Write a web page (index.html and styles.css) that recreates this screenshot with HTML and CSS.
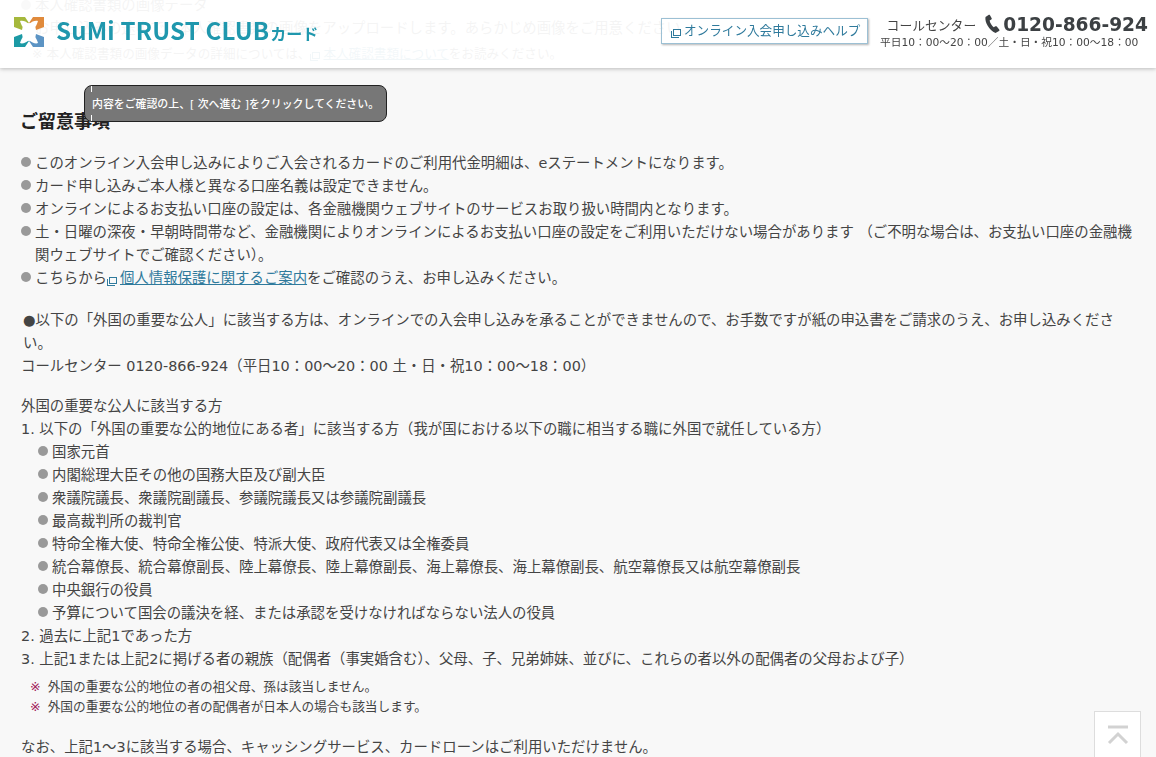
FILE: index.html
```html
<!DOCTYPE html>
<html lang="ja">
<head>
    <meta charset="UTF-8">
    <title>オンライン入会申し込み</title>
    <link rel="stylesheet" href="styles.css">
</head>
<body>
    <!-- 固定ヘッダー -->
    <header class="site-header">
        <div class="logo">
            <svg class="logo-mark" width="32" height="32" viewBox="0 0 32 32">
                <path d="M1 1h11l4 6-6 2-1 5-8-3z" fill="#a5b83c"/>
                <path d="M31 1H20l-4 6 6 2 1 5 8-3z" fill="#e08a3c"/>
                <path d="M1 31h11l4-6-6-2-1-5-8 3z" fill="#1c9aa5"/>
                <path d="M31 31H20l-4-6 6-2 1-5 8 3z" fill="#5c94c4"/>
                <path d="M16 8c3-3 7-4 9-3-1 3-2 6-5 8l-2 3 2 3c3 2 4 5 5 8-2 1-6 0-9-3-3 3-7 4-9 3 1-3 2-6 5-8l2-3-2-3C9 11 8 8 7 5c2-1 6 0 9 3z" fill="#fff"/>
            </svg>
            <span class="logo-text">SuMi TRUST CLUB<span class="logo-kana">カード</span></span>
        </div>
        <div class="header-right">
            <a class="help-btn" href="#"><span class="win-icon"></span>オンライン入会申し込みヘルプ</a>
            <div class="call-box">
                <div class="call-main">
                    <span class="call-label">コールセンター</span>
                    <svg class="phone" width="18" height="20" viewBox="0 0 18 20">
                        <path d="M4.5 1 1.500 3C.5 8 5 16 11.500 19l3.500-2c.6-.4.6-1 .2-1.500l-2.400-3c-.4-.4-1-.5-1.400-.2l-1.700 1C8 12 6 9 5.600 6.500l1.700-1c.5-.3.600-.8.400-1.300L6 1.300C5.700.8 5 .7 4.500 1z" fill="#3c4043"/>
                    </svg>
                    <span class="call-number">0120-866-924</span>
                </div>
                <div class="call-hours">平日10：00～20：00／土・日・祝10：00～18：00</div>
            </div>
        </div>
    </header>

    <div class="tooltip">内容をご確認の上、[ 次へ進む ]をクリックしてください。</div>

    <main class="main-content">
        <!-- ヘッダーの下に隠れる部分 -->
        <div class="behind">
            <p><span class="dot"></span>本人確認書類の画像データ</p>
            <p class="behind-line">お申し込みの途中で、本人確認書類の画像をアップロードします。あらかじめ画像をご用意ください。</p>
            <p class="behind-note"><span class="behind-mark">※</span>本人確認書類の画像データの詳細については、<span class="win-icon"></span><a href="#">本人確認書類について</a>をお読みください。</p>
        </div>

        <h2 class="section-title">ご留意事項</h2>

        <ul class="bullet-list">
            <li>このオンライン入会申し込みによりご入会されるカードのご利用代金明細は、eステートメントになります。</li>
            <li>カード申し込みご本人様と異なる口座名義は設定できません。</li>
            <li>オンラインによるお支払い口座の設定は、各金融機関ウェブサイトのサービスお取り扱い時間内となります。</li>
            <li>土・日曜の深夜・早朝時間帯など、金融機関によりオンラインによるお支払い口座の設定をご利用いただけない場合があります （ご不明な場合は、お支払い口座の金融機関ウェブサイトでご確認ください）。</li>
            <li>こちらから<span class="win-icon"></span><a href="#">個人情報保護に関するご案内</a>をご確認のうえ、お申し込みください。</li>
        </ul>

        <p class="notice">●以下の「外国の重要な公人」に該当する方は、オンラインでの入会申し込みを承ることができませんので、お手数ですが紙の申込書をご請求のうえ、お申し込みください。</p>
        <p>コールセンター 0120-866-924（平日10：00～20：00 土・日・祝10：00～18：00）</p>

        <p class="pep-title">外国の重要な公人に該当する方</p>
        <p>1. 以下の「外国の重要な公的地位にある者」に該当する方（我が国における以下の職に相当する職に外国で就任している方）</p>
        <ul class="bullet-list sub-list">
            <li>国家元首</li>
            <li>内閣総理大臣その他の国務大臣及び副大臣</li>
            <li>衆議院議長、衆議院副議長、参議院議長又は参議院副議長</li>
            <li>最高裁判所の裁判官</li>
            <li>特命全権大使、特命全権公使、特派大使、政府代表又は全権委員</li>
            <li>統合幕僚長、統合幕僚副長、陸上幕僚長、陸上幕僚副長、海上幕僚長、海上幕僚副長、航空幕僚長又は航空幕僚副長</li>
            <li>中央銀行の役員</li>
            <li>予算について国会の議決を経、または承認を受けなければならない法人の役員</li>
        </ul>
        <p>2. 過去に上記1であった方</p>
        <p>3. 上記1または上記2に掲げる者の親族（配偶者（事実婚含む）、父母、子、兄弟姉妹、並びに、これらの者以外の配偶者の父母および子）</p>

        <ul class="note-list">
            <li><span class="mark">※</span>外国の重要な公的地位の者の祖父母、孫は該当しません。</li>
            <li><span class="mark">※</span>外国の重要な公的地位の者の配偶者が日本人の場合も該当します。</li>
        </ul>

        <p class="closing">なお、上記1～3に該当する場合、キャッシングサービス、カードローンはご利用いただけません。</p>
    </main>

    <a class="page-top" href="#">
        <svg width="22" height="20" viewBox="0 0 22 20">
            <path d="M1 2h20" stroke="#d2d2d2" stroke-width="3" fill="none"/>
            <path d="M2 18l9-9 9 9" stroke="#d2d2d2" stroke-width="3" fill="none"/>
        </svg>
    </a>
</body>
</html>
```

FILE: styles.css
```css
* {
    margin: 0;
    padding: 0;
    box-sizing: border-box;
}

html, body {
    height: 100%;
    overflow: hidden;
}

body {
    font-family: "DejaVu Sans", "Noto Sans CJK JP", sans-serif;
    font-size: 14.4px;
    line-height: 23px;
    color: #444;
    background: #f8f8f8;
}

a {
    color: #2f7a9c;
}

/* ヘッダー */
.site-header {
    position: fixed;
    top: 0;
    left: 0;
    right: 0;
    height: 68px;
    z-index: 10;
    display: flex;
    justify-content: space-between;
    background: rgba(255, 255, 255, 0.94);
    box-shadow: 0 1px 4px rgba(0, 0, 0, 0.25);
}

.logo {
    display: flex;
    align-items: center;
    padding: 15px 0 0 13px;
    height: 48px;
}

.logo-mark {
    flex: none;
}

.logo-text {
    margin-left: 11px;
    font-family: "Noto Sans CJK JP", sans-serif;
    font-size: 24px;
    font-weight: 700;
    letter-spacing: 0.2px;
    color: #1f97ad;
    white-space: nowrap;
}

.logo-kana {
    margin-left: 1px;
    font-size: 16px;
    font-weight: 700;
    letter-spacing: 0;
}

.header-right {
    display: flex;
    align-items: flex-start;
    padding-right: 8px;
}

.help-btn {
    margin-top: 18px;
    width: 207px;
    height: 26px;
    padding-left: 9px;
    font-size: 12.6px;
    line-height: 24px;
    color: #2f7a9c;
    text-decoration: none;
    white-space: nowrap;
    border: 1px solid #9cc0d4;
    box-shadow: 1px 1px 2px rgba(0, 0, 0, 0.3);
}

.call-box {
    width: 268px;
    margin: 12px 0 0 12px;
}

.call-main {
    display: flex;
    align-items: center;
    justify-content: flex-end;
    height: 24px;
}

.call-label {
    margin-top: 2px;
    font-size: 12.8px;
}

.phone {
    margin: 0 1px 0 8px;
}

.call-number {
    font-size: 18.6px;
    font-weight: bold;
    color: #3c4043;
    white-space: nowrap;
}

.call-hours {
    font-size: 10.7px;
    line-height: 14px;
    white-space: nowrap;
}

.win-icon {
    display: inline-block;
    width: 8px;
    height: 7px;
    margin: 0 3px 0 2px;
    border: 1px solid #2f7a9c;
    box-shadow: -1px 1px 0 0 #fff, -2px 2px 0 0 #2f7a9c;
    vertical-align: -1px;
}

/* ツールチップ */
.tooltip {
    position: absolute;
    top: 85px;
    left: 84px;
    z-index: 20;
    width: 303px;
    height: 37px;
    padding-left: 7px;
    font-size: 10.9px;
    font-weight: 500;
    line-height: 37px;
    color: #fff;
    white-space: nowrap;
    background: #777;
    border: 1px solid #222;
    border-radius: 8px;
}

.tooltip::before,
.tooltip::after {
    content: "";
    position: absolute;
    left: 6px;
    width: 1px;
    height: 6px;
    background: #fff;
}

.tooltip::before {
    top: 0;
}

.tooltip::after {
    bottom: 0;
}

/* 本文 */
.main-content {
    padding: 0 20px 0 21px;
    margin-top: -6px;
}

.behind {
    height: 115px;
}

.behind-line {
    padding-left: 14px;
}

.behind-note {
    padding-left: 11px;
    margin-top: 2px;
    font-size: 12.6px;
}

.behind-mark {
    margin-right: 4px;
}

.dot {
    display: inline-block;
    width: 10px;
    height: 10px;
    margin: 0 4px 0 0;
    background: #999;
    border-radius: 50%;
}

.section-title {
    margin-bottom: 17px;
    margin-left: -1px;
    font-size: 18px;
    font-weight: bold;
    line-height: 26px;
    color: #222;
}

.bullet-list {
    list-style: none;
}

.bullet-list li {
    position: relative;
    padding-left: 14px;
}

.bullet-list li::before {
    content: "";
    position: absolute;
    left: 0;
    top: 5px;
    width: 10px;
    height: 10px;
    background: #999;
    border-radius: 50%;
}

.notice {
    margin-top: 19px;
    padding-left: 2px;
}

.pep-title {
    margin-top: 17px;
}

.sub-list {
    padding-left: 17px;
}

.note-list {
    list-style: none;
    margin: 6px 0 0 9px;
    font-size: 12.7px;
    line-height: 20px;
}

.mark {
    margin-right: 7px;
    color: #a0185a;
}

.closing {
    margin-top: 19px;
}

.page-top {
    position: fixed;
    right: 15px;
    bottom: -21px;
    width: 47px;
    height: 67px;
    padding-top: 13px;
    text-align: center;
    background: #fff;
    border: 1px solid #ddd;
}
```
